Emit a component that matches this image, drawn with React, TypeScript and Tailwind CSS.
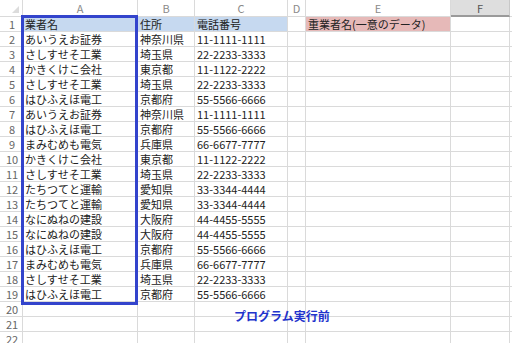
import React from 'react';

const rows: [string, string, string][] = [
  ['あいうえお証券', '神奈川県', '11-1111-1111'],
  ['さしすせそ工業', '埼玉県', '22-2233-3333'],
  ['かきくけこ会社', '東京都', '11-1122-2222'],
  ['さしすせそ工業', '埼玉県', '22-2233-3333'],
  ['はひふえほ電工', '京都府', '55-5566-6666'],
  ['あいうえお証券', '神奈川県', '11-1111-1111'],
  ['はひふえほ電工', '京都府', '55-5566-6666'],
  ['まみむめも電気', '兵庫県', '66-6677-7777'],
  ['かきくけこ会社', '東京都', '11-1122-2222'],
  ['さしすせそ工業', '埼玉県', '22-2233-3333'],
  ['たちつてと運輸', '愛知県', '33-3344-4444'],
  ['たちつてと運輸', '愛知県', '33-3344-4444'],
  ['なにぬねの建設', '大阪府', '44-4455-5555'],
  ['なにぬねの建設', '大阪府', '44-4455-5555'],
  ['はひふえほ電工', '京都府', '55-5566-6666'],
  ['まみむめも電気', '兵庫県', '66-6677-7777'],
  ['さしすせそ工業', '埼玉県', '22-2233-3333'],
  ['はひふえほ電工', '京都府', '55-5566-6666'],
];

const cols = 'grid grid-cols-[23px_115px_57px_93px_18px_145px_59px_1fr]';
const cell = 'border-r border-b border-[#dadada] h-[15px] leading-[14px] pl-[2px] whitespace-nowrap overflow-hidden';

export default function App() {
  const body: (string[])[] = [
    ['業者名', '住所', '電話番号'],
    ...rows,
    ['', '', ''],
    ['', '', ''],
    ['', '', ''],
  ];

  return (
    <div
      className="relative w-[512px] h-[343px] overflow-hidden bg-white text-[11px] text-[#222]"
      style={{ fontFamily: '"Noto Sans CJK JP", "Noto Sans", sans-serif' }}
    >
      <div className={cols}>
        <div className="h-[17px] border-r border-b border-[#dadada] relative">
          <div className="absolute right-[3px] bottom-[3px] w-0 h-0 border-l-[7px] border-l-transparent border-b-[7px] border-b-[#dcdcdc]" />
        </div>
        {['A', 'B', 'C', 'D', 'E'].map(c => (
          <div key={c} className="h-[17px] border-r border-b border-[#dadada] text-center leading-[17px] text-[#8a8a8a]">
            {c}
          </div>
        ))}
        <div className="h-[17px] border-r border-b-2 border-b-[#9a9a9a] border-r-[#c8c8c8] bg-[#dedede] text-center leading-[16px] text-[#555]">F</div>
        <div className="h-[17px] border-b border-[#dadada]" />

        {body.map((r, i) => (
          <React.Fragment key={i}>
            <div className={`${cell} text-center pl-0 text-[#666]`}>{i + 1}</div>
            <div className={`${cell} ${i === 0 ? 'bg-[#c6d9f0]' : ''}`}>{r[0]}</div>
            <div className={`${cell} ${i === 0 ? 'bg-[#c6d9f0]' : ''}`}>{r[1]}</div>
            <div className={`${cell} ${i === 0 ? 'bg-[#c6d9f0]' : ''}`}>{r[2]}</div>
            <div className={cell} />
            <div className={`${cell} ${i === 0 ? 'bg-[#e6b9b8]' : ''}`}>{i === 0 ? '重業者名(一意のデータ)' : ''}</div>
            <div className={cell} />
            <div className="h-[15px] border-b border-[#dadada]" />
          </React.Fragment>
        ))}
      </div>

      <div className="absolute left-[21px] top-[15px] w-[117px] h-[290px] border-[3px] border-[#3344cc] pointer-events-none" />

      <div className="absolute left-[234px] top-[308px] text-[12px] leading-[16px] font-bold text-[#2233cc]">
        プログラム実行前
      </div>
    </div>
  );
}
